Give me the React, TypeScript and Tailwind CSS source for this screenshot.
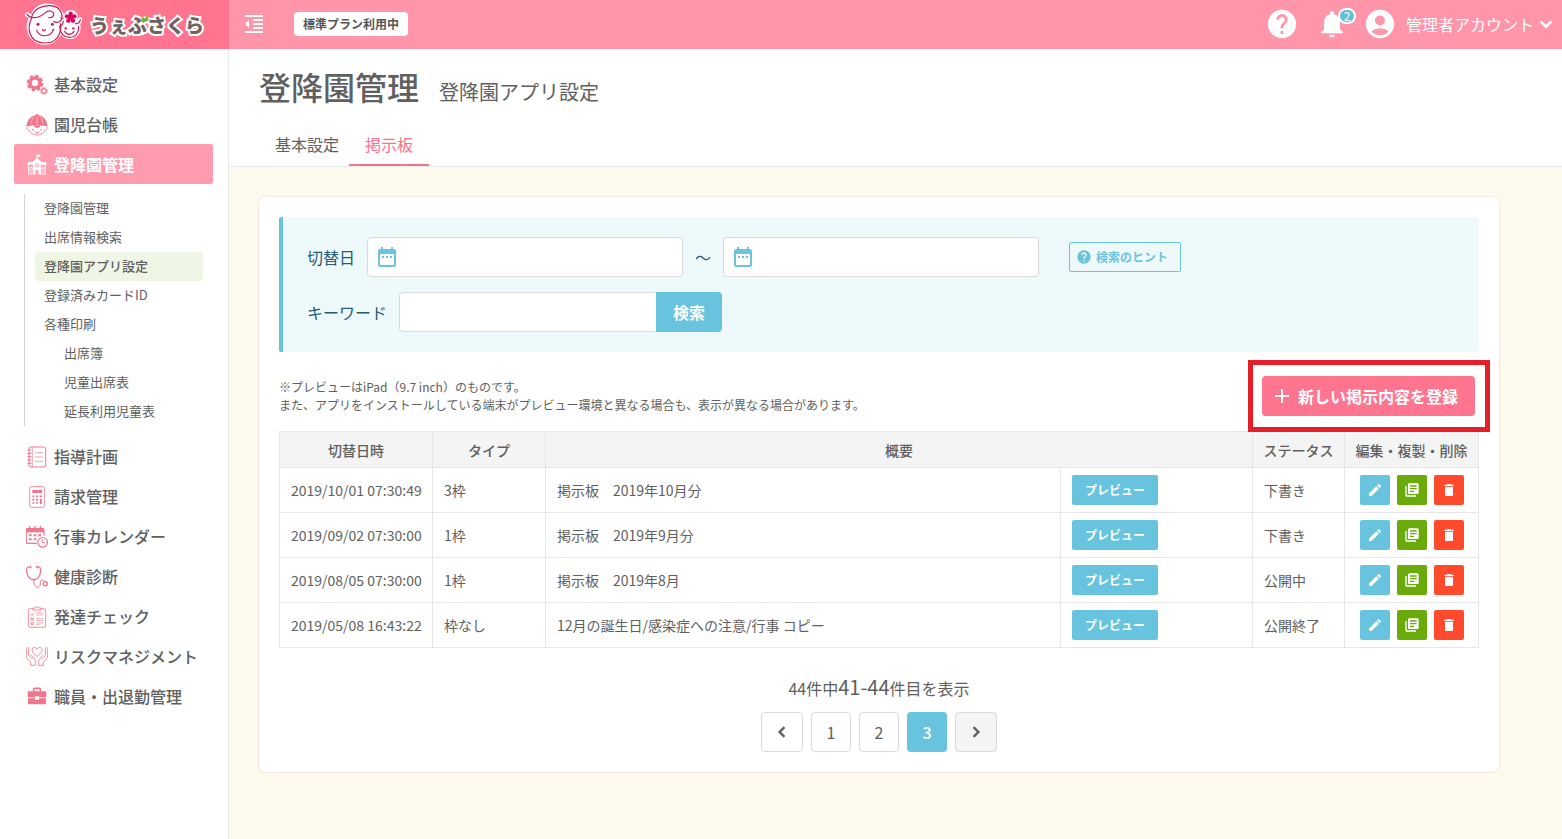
import React from 'react';
import {
  MdAccountCircle,
  MdAdd,
  MdDateRange,
  MdDelete,
  MdEdit,
  MdFormatIndentDecrease,
  MdHelp,
  MdLibraryBooks,
  MdNotifications,
} from 'react-icons/md';

interface Notice {
  switchedAt: string;
  type: string;
  summary: string;
  status: string;
}

const NOTICES: Notice[] = [
  { switchedAt: '2019/10/01 07:30:49', type: '3枠', summary: '掲示板　2019年10月分', status: '下書き' },
  { switchedAt: '2019/09/02 07:30:00', type: '1枠', summary: '掲示板　2019年9月分', status: '下書き' },
  { switchedAt: '2019/08/05 07:30:00', type: '1枠', summary: '掲示板　2019年8月', status: '公開中' },
  { switchedAt: '2019/05/08 16:43:22', type: '枠なし', summary: '12月の誕生日/感染症への注意/行事 コピー', status: '公開終了' },
];

const SUB_MENU = [
  { label: '登降園管理' },
  { label: '出席情報検索' },
  { label: '登降園アプリ設定', active: true },
  { label: '登録済みカードID' },
  { label: '各種印刷' },
  { label: '出席簿', nested: true },
  { label: '児童出席表', nested: true },
  { label: '延長利用児童表', nested: true },
];

const Icon = ({ children }: { children: React.ReactNode }) => (
  <svg viewBox="0 0 66 66" className="w-[22px] h-[22px] shrink-0" fill="none" stroke="currentColor" strokeWidth="3" aria-hidden="true">
    {children}
  </svg>
);

const GearsIcon = () => (
  <Icon>
    <circle cx="27" cy="27" r="15" strokeWidth="11" />
    <circle cx="27" cy="27" r="22" strokeWidth="6" strokeDasharray="10 7.28" />
    <circle cx="54" cy="51" r="7" strokeWidth="4" />
    <circle cx="54" cy="51" r="10" strokeWidth="3" strokeDasharray="4 3.85" />
  </Icon>
);

const ChildIcon = () => (
  <Icon>
    <path d="M4 32C6 14 18 5 33 5s27 9 29 27z" fill="currentColor" />
    <path d="M29 3h8" strokeWidth="5" />
    <path d="M33 8v22M22 10c-5 6-6 13-6 20M44 10c5 6 6 13 6 20" stroke="white" strokeWidth="1.5" />
    <path d="M1 35c20-4 44-4 64 0" strokeWidth="4" />
    <path d="M7 38c-6 2-4 9 1 10 5 10 14 15 25 15s20-5 25-15c5-1 7-8 1-10" strokeWidth="2.5" />
    <path d="M24 36h18l-9 5z" fill="currentColor" />
    <path d="M18 47h5M43 47h5" strokeWidth="4" />
    <path d="M26 53c4 5 10 5 14 0" />
  </Icon>
);

const SchoolIcon = () => (
  <Icon>
    <path d="M33 2v14" />
    <path d="M33 2h10v7H33zM33 12l14 12h12l3 8H4l3-8h12z" fill="currentColor" stroke="none" />
    <path d="M8 32v28h15V32M43 32v28h15V32" />
    <path d="M23 28l10-9 10 9v33h-6V48h-8v13h-6z" fill="currentColor" stroke="none" />
    <circle cx="33" cy="34" r="5" stroke="#ff9bae" strokeWidth="2.5" />
    <path d="M12 40h7v7h-7zM47 40h7v7h-7zM10 53h10M46 53h10" strokeWidth="2.5" />
  </Icon>
);

const NotebookIcon = () => (
  <Icon>
    <rect x="9" y="3" width="50" height="60" rx="6" />
    <path d="M19 3v60M27 20h25M27 33h25M27 46h25" strokeWidth="2" />
    <path d="M5 12h11M5 22h11M5 32h11M5 42h11M5 52h11" strokeWidth="3.5" />
  </Icon>
);

const CalculatorIcon = () => (
  <Icon>
    <rect x="11" y="2" width="44" height="62" rx="5" strokeWidth="2.5" />
    <rect x="19" y="12" width="29" height="9" fill="currentColor" stroke="none" />
    <path d="M19 31h6M30 31h6M41 31h7M19 41h6M30 41h6M19 51h6M30 51h6" strokeWidth="5" />
    <path d="M44.5 39v15" strokeWidth="6" />
  </Icon>
);

const CalendarIcon = () => (
  <Icon>
    <path d="M32 52H5c-2 0-4-1-4-4V12c0-3 2-4 4-4h45c3 0 4 1 4 4v17" strokeWidth="3.5" />
    <path d="M1 8h53v11H1z" fill="currentColor" stroke="none" />
    <path d="M11 0v10M27 0v10M43 0v10" strokeWidth="4" />
    <path d="M9 28h8M23 28h8M37 28h8M9 40h8M23 40h8" strokeWidth="6" />
    <circle cx="50" cy="49" r="14.5" fill="white" strokeWidth="3.5" />
    <path d="M49 40v10h8" />
  </Icon>
);

const StethoscopeIcon = () => (
  <Icon>
    <path d="M13 3C4 2 2 6 2 12c0 16 8 29 21 29s21-13 21-29c0-6-2-10-11-9" strokeWidth="4" />
    <path d="M14 0v7M32 0v7" strokeWidth="4" />
    <path d="M24 41v10c0 16 19 16 19 3 0-7 0-12 6-12 4 0 7 2 8 5" />
    <circle cx="58" cy="53" r="6" strokeWidth="4" />
  </Icon>
);

const ClipboardIcon = () => (
  <Icon>
    <rect x="7" y="8" width="52" height="56" rx="5" strokeWidth="2.5" />
    <path d="M21 12V6h7c1-5 9-5 10 0h7v6z" fill="white" strokeWidth="2.5" />
    <path d="M15 24l3 4 6-8M15 36h7v6h-7zM15 50h7v6h-7z" strokeWidth="2.5" />
    <path d="M31 21h21M31 27h21M31 37h10M44 37h8M31 43h21M31 51h21M31 56h10" strokeWidth="2" />
  </Icon>
);

const CareIcon = () => (
  <Icon>
    <path d="M33 31C23 24 18 18 18 12c0-10 12-10 15-2 3-8 15-8 15 2 0 6-5 12-15 19z" strokeWidth="2.5" />
    <path d="M14 58V49L4 38C1 34 1 30 1 25V8c0-4 7-4 7 0v20l12 12M15 27l10 12c3 3 3 6 3 9v10H14" strokeWidth="2.5" />
    <path d="M52 58V49l10-11c3-4 3-8 3-13V8c0-4-7-4-7 0v20L46 40M51 27L41 39c-3 3-3 6-3 9v10h14" strokeWidth="2.5" />
  </Icon>
);

const BriefcaseIcon = () => (
  <Icon>
    <path d="M23 17v-7c0-2 1-3 3-3h14c2 0 3 1 3 3v7" strokeWidth="5" />
    <path d="M9 16h48c3 0 4 1 4 4v14H39v-3H27v3H5V20c0-3 1-4 4-4zM6 37h21v5h12v-5h21v14c0 3-1 4-4 4H10c-3 0-4-1-4-4z" fill="currentColor" stroke="none" />
  </Icon>
);

const Chevron = ({ d, className }: { d: string; className: string }) => (
  <svg viewBox="0 0 24 24" className={className} fill="none" stroke="currentColor" strokeWidth="2.6" aria-hidden="true">
    <path d={d} />
  </svg>
);

const MENU_TOP = [
  { label: '基本設定', icon: GearsIcon },
  { label: '園児台帳', icon: ChildIcon },
  { label: '登降園管理', icon: SchoolIcon, active: true },
];

const MENU_BOTTOM = [
  { label: '指導計画', icon: NotebookIcon },
  { label: '請求管理', icon: CalculatorIcon },
  { label: '行事カレンダー', icon: CalendarIcon },
  { label: '健康診断', icon: StethoscopeIcon },
  { label: '発達チェック', icon: ClipboardIcon },
  { label: 'リスクマネジメント', icon: CareIcon },
  { label: '職員・出退勤管理', icon: BriefcaseIcon },
];

const MenuItem = ({ label, icon: ItemIcon, active }: { label: string; icon: React.FC; active?: boolean }) => (
  <a
    href="#"
    className={`flex items-center gap-1.5 h-10 pl-3 rounded-xs ${
      active ? 'bg-[#ff9bae] font-bold text-white' : 'font-medium text-[#606060]'
    }`}
  >
    <span className={`flex pt-0.5 ${active ? 'text-white' : 'text-[#f2758b]'}`}>
      <ItemIcon />
    </span>
    {label}
  </a>
);

const Logo = () => (
  <a href="#" className="w-[229px] shrink-0 h-full bg-[#ff7590] flex items-center pl-6 gap-2">
    <svg viewBox="70 8 174 132" className="w-[58px] h-11" fill="none" stroke="#c9185a" strokeWidth="3.5" strokeLinecap="round" aria-hidden="true">
      <g fill="white" stroke="white" strokeWidth="14" strokeLinejoin="round">
        <circle cx="132" cy="79" r="47" />
        <circle cx="207" cy="83" r="26" />
        <circle cx="210" cy="50" r="14" />
        <path d="M80 43c10 8 20 10 30 7M238 58l-6 12" />
        <path d="M100 40c16-30 66-34 84 6" />
      </g>
      <path d="M93 52c-16 34-7 74 36 76 38 2 55-26 50-58" />
      <path d="M79 42c7 9 20 12 34 8 20-6 20-20 36-18 16 3 12 22-5 20" />
      <path d="M93 50c6-22 30-36 56-34 24 2 38 18 34 38-2 12-12 14-24 10" />
      <path d="M177 80c2 20 12 31 30 31 18 0 28-14 27-32" />
      <path d="M177 78c6-2 10-8 11-15M239 58c-1 8-8 13-14 12" />
      <g fill="#c9185a" stroke="none">
        <circle cx="112" cy="72" r="4.5" />
        <circle cx="155" cy="72" r="4.5" />
        <circle cx="158" cy="88" r="3" />
        <circle cx="195" cy="84" r="3.5" />
        <circle cx="218" cy="84" r="3.5" />
      </g>
      <path d="M125 87c0 6 9 6 9 0M108 90c8 22 42 22 50-2" />
      <path d="M192 93c5 12 22 12 28 0" />
      <g fill="#e4005f" stroke="none">
        <circle cx="210" cy="40" r="6.5" />
        <circle cx="221" cy="48" r="6.5" />
        <circle cx="217" cy="61" r="6.5" />
        <circle cx="203" cy="61" r="6.5" />
        <circle cx="199" cy="48" r="6.5" />
        <circle cx="210" cy="51" r="9" />
      </g>
    </svg>
    <span className="relative text-[19px] leading-6 font-black text-[#6f6361] [paint-order:stroke_fill] [-webkit-text-stroke:4px_white]">
      うぇぶさくら
      <svg viewBox="0 0 8 8" className="absolute left-[51px] top-[3px] w-2 h-2" fill="#7dbb28" aria-hidden="true">
        <path d="M0 2l2.5-1 2 4-2.5 1zM4 1l2-1 2 4-2 1z" />
      </svg>
    </span>
  </a>
);

const Header = () => (
  <header className="flex h-[49px] bg-[#ff95a8] text-white">
    <Logo />
    <div className="flex-1 flex items-center pl-[13px] pr-1 pb-px">
      <button type="button" aria-label="メニューを閉じる">
        <MdFormatIndentDecrease size={24} />
      </button>
      <span className="ml-7 h-6 px-[9px] rounded-sm bg-white text-xs leading-6 font-bold text-[#555]">標準プラン利用中</span>
      <button type="button" aria-label="ヘルプ" className="ml-auto">
        <MdHelp size={34} />
      </button>
      <button type="button" aria-label="お知らせ" className="relative ml-[17px]">
        <MdNotifications size={32} />
        <span className="absolute top-0 left-[22px] w-[18px] h-4 rounded-full border-2 border-white bg-[#5fbfd9] text-xs leading-3 text-center">2</span>
      </button>
      <button type="button" className="flex items-center ml-[15px]">
        <MdAccountCircle size={34} />
        <span className="ml-[9px]">管理者アカウント</span>
        <Chevron d="M6.700 9.300l5.300 5.300 5.300-5.300" className="w-6 h-6" />
      </button>
    </div>
  </header>
);

const Sidebar = () => (
  <nav className="w-[229px] shrink-0 bg-white border-r border-[#e9e9e9] pt-[15px] pl-3.5 pr-[15px]">
    {MENU_TOP.map((item) => (
      <MenuItem key={item.label} {...item} />
    ))}
    <ul className="my-2.5 mx-2.5 border-l border-[#d5d5d5] pl-2.5 text-[13px]">
      {SUB_MENU.map((item) => (
        <li key={item.label}>
          <a
            href="#"
            className={`block h-[29px] leading-[27px] rounded-xs ${item.nested ? 'pl-[29px]' : 'pl-[9px]'} ${
              item.active ? 'bg-[#eff6e6] font-medium text-[#606060]' : ''
            }`}
          >
            {item.label}
          </a>
        </li>
      ))}
    </ul>
    {MENU_BOTTOM.map((item) => (
      <MenuItem key={item.label} {...item} />
    ))}
  </nav>
);

const DateInput = ({ id, label }: { id: string; label?: string }) => (
  <div className="relative">
    <MdDateRange size={24} className="absolute left-2 top-2 text-[#6bc4dc]" />
    <input id={id} type="text" aria-label={label} className="w-[316px] h-10 pl-10 pr-3 rounded-sm border border-[#d9d9d9] bg-white" />
  </div>
);

const SearchPanel = () => (
  <form className="flex flex-col gap-[15px] rounded-xs border-l-4 border-[#6bc4dc] bg-[#edf9fb] py-5 px-6 text-[#265a76]">
    <div className="flex items-center gap-3">
      <label htmlFor="date-from">切替日</label>
      <DateInput id="date-from" />
      <span>〜</span>
      <DateInput id="date-to" label="切替日（終了）" />
      <button type="button" className="flex items-center gap-1 h-[30px] ml-[18px] pl-1.5 pr-3 rounded-xs border border-[#6bc4dc] text-xs font-bold text-[#6bc4dc]">
        <MdHelp size={16} />
        検索のヒント
      </button>
    </div>
    <div className="flex items-center">
      <label htmlFor="keyword">キーワード</label>
      <input id="keyword" type="text" className="ml-3 w-[257px] h-10 px-3 rounded-l-sm border border-r-0 border-[#d9d9d9] bg-white" />
      <button type="submit" className="w-[66px] h-10 rounded-r-sm bg-[#68c4de] font-bold text-white">検索</button>
    </div>
  </form>
);

const NoticeTable = () => (
  <table className="w-full table-fixed border-collapse text-sm [&_td]:border [&_td]:border-[#e6e6e6] [&_td]:px-[11px] [&_th]:border [&_th]:border-[#e6e6e6] [&_th]:font-medium">
    <colgroup>
      <col className="w-[153px]" />
      <col className="w-[113px]" />
      <col />
      <col className="w-48" />
      <col className="w-[92px]" />
      <col className="w-[134px]" />
    </colgroup>
    <thead>
      <tr className="h-9 bg-[#f4f4f4]">
        <th>切替日時</th>
        <th>タイプ</th>
        <th colSpan={2}>概要</th>
        <th>ステータス</th>
        <th>編集・複製・削除</th>
      </tr>
    </thead>
    <tbody>
      {NOTICES.map((notice) => (
        <tr key={notice.switchedAt} className="h-[45px]">
          <td className="whitespace-nowrap">{notice.switchedAt}</td>
          <td>{notice.type}</td>
          <td>{notice.summary}</td>
          <td>
            <button type="button" className="block w-[86px] h-[30px] rounded-xs bg-[#68c4de] text-xs font-bold text-white">プレビュー</button>
          </td>
          <td>{notice.status}</td>
          <td>
            <div className="flex justify-center gap-[7px] text-white">
              <button type="button" aria-label="編集" className="flex items-center justify-center w-[30px] h-[30px] rounded-xs bg-[#68c4de]">
                <MdEdit size={16} />
              </button>
              <button type="button" aria-label="複製" className="flex items-center justify-center w-[30px] h-[30px] rounded-xs bg-[#6aaa0a]">
                <MdLibraryBooks size={16} />
              </button>
              <button type="button" aria-label="削除" className="flex items-center justify-center w-[30px] h-[30px] rounded-xs bg-[#ff4a2e]">
                <MdDelete size={16} />
              </button>
            </div>
          </td>
        </tr>
      ))}
    </tbody>
  </table>
);

const Pagination = () => (
  <div className="mt-[23px]">
    <p className="text-center leading-8">
      44件中<span className="text-xl leading-8">41-44</span>件目を表示
    </p>
    <div className="flex justify-center gap-2 mt-2">
      <button type="button" aria-label="前へ" className="flex items-center justify-center w-[42px] h-10 rounded-sm border border-[#d9d9d9] bg-white">
        <Chevron d="M14.700 6.700L9.400 12l5.300 5.300" className="w-[22px] h-[22px]" />
      </button>
      <button type="button" className="w-10 h-10 rounded-sm border border-[#d9d9d9] bg-white">1</button>
      <button type="button" className="w-10 h-10 rounded-sm border border-[#d9d9d9] bg-white">2</button>
      <button type="button" className="w-10 h-10 rounded-sm bg-[#68c4de] font-medium text-white">3</button>
      <button type="button" aria-label="次へ" className="flex items-center justify-center w-[42px] h-10 rounded-sm border border-[#d9d9d9] bg-[#f4f4f4]">
        <Chevron d="M9.300 6.700l5.300 5.300-5.300 5.300" className="w-[22px] h-[22px]" />
      </button>
    </div>
  </div>
);

export default function App() {
  return (
    <div className="min-h-screen flex flex-col bg-[#fffaee] font-['Noto_Sans_CJK_JP',sans-serif] text-base text-[#606060]">
      <Header />
      <div className="flex-1 flex">
        <Sidebar />
        <main className="flex-1 min-w-0">
          <div className="bg-white border-b border-[#e9e9e9] pl-[30px]">
            <div className="flex items-baseline gap-5 pt-3.5">
              <h1 className="text-[32px] leading-[46px] font-medium">登降園管理</h1>
              <p className="text-xl">登降園アプリ設定</p>
            </div>
            <div className="flex mt-4 leading-[38px]">
              <a href="#" className="pl-4 pr-2.5 pb-px border-b-2 border-transparent">基本設定</a>
              <a href="#" className="px-4 pb-px border-b-2 border-[#f2758b] text-[#ff6f8b]">掲示板</a>
            </div>
          </div>

          <div className="pt-[30px] pb-[66px] pl-[30px] pr-[63px]">
            <section className="rounded-md bg-white p-5 shadow-[0_0_2px_rgba(0,0,0,0.2)]">
              <SearchPanel />
              <div className="flex items-center justify-between mt-6 mb-[15px]">
                <p className="text-xs leading-[18px]">
                  ※プレビューはiPad（9.7 inch）のものです。
                  <br />
                  また、アプリをインストールしている端末がプレビュー環境と異なる場合も、表示が異なる場合があります。
                </p>
                <div className="relative mr-1">
                  <button type="button" className="flex items-center gap-1 h-10 pl-2 pr-[17px] rounded-sm bg-[#ff7590] font-bold text-white">
                    <MdAdd size={24} />
                    新しい掲示内容を登録
                  </button>
                  {/* 新規登録ボタンの強調枠 */}
                  <div className="absolute -left-3.5 -right-[15px] -inset-y-4 border-5 border-[#e61e28] pointer-events-none" />
                </div>
              </div>
              <NoticeTable />
              <Pagination />
            </section>
          </div>
        </main>
      </div>
    </div>
  );
}
